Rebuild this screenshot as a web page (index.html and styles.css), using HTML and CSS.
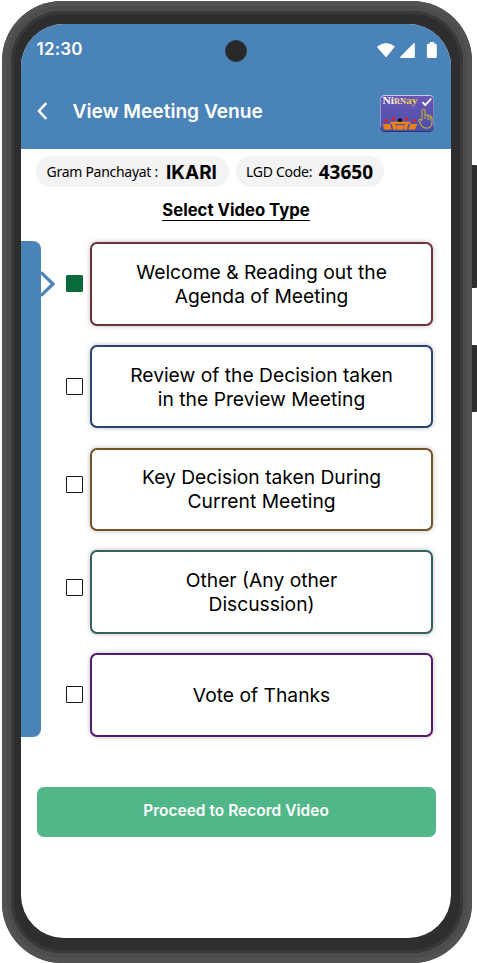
FILE: index.html
```html
<!DOCTYPE html>
<html lang="en">
<head>
<meta charset="utf-8">
<title>View Meeting Venue</title>
<link rel="stylesheet" href="styles.css">
</head>
<body>
<div class="device">
  <div class="bezel">
    <div class="bezel-edge">
      <main class="screen">
        <header class="header">
          <div class="status">
            <span class="time">12:30</span>
            <span class="camera"></span>
            <svg class="status-icons" width="62" height="20" viewBox="0 0 62 20">
              <path fill="#fff" d="M1.3 5.6Q10-1.400 19 5.600L10.900 15.500Q10.100 16.500 9.300 15.500L1.500 6.700Q1 6 1.300 5.600Z"/>
              <path fill="#fff" d="M38.800 2V17H24.500Q23.700 16.800 24.200 16.100L37.800 2Z"/>
              <path fill="#fff" d="M53.800 1H58.200V2.700H59.500Q60.800 2.700 60.800 4V15.700Q60.800 17 59.500 17H52.200Q50.900 17 50.900 15.700V4Q50.900 2.700 52.200 2.700H53.800Z"/>
            </svg>
          </div>
          <div class="titlebar">
            <svg class="back" width="11" height="18" viewBox="0 0 11 18"><path d="M9.300 1.200 2 9l7.300 7.800" fill="none" stroke="#fff" stroke-width="2.500"/></svg>
            <h1 class="title">View Meeting Venue</h1>
            <svg class="logo" width="56" height="40" viewBox="0 0 56 40">
              <defs><linearGradient id="plate" x1="0" y1="0" x2="0" y2="1"><stop offset="0" stop-color="#6a56b4"/><stop offset="1" stop-color="#4a4fac"/></linearGradient></defs>
              <rect x="1.200" y="2" width="53.600" height="36" rx="4.500" fill="#28346e"/>
              <rect x="1.200" y="1" width="53.600" height="35" rx="4.500" fill="#c9c8ec"/>
              <rect x="1.700" y="2" width="52.800" height="35" rx="4" fill="url(#plate)"/>
              <g fill="#7e78c6"><circle cx="8" cy="15" r=".6"/><circle cx="15" cy="19" r=".5"/><circle cx="20" cy="14" r=".5"/><circle cx="27" cy="18" r=".6"/><circle cx="34" cy="14" r=".6"/><circle cx="12" cy="23" r=".5"/><circle cx="38" cy="20" r=".5"/><circle cx="23" cy="22" r=".5"/></g>
              <text x="3.500" y="10" class="logo-text" textLength="35" lengthAdjust="spacingAndGlyphs"><tspan fill="#fff">Ni</tspan><tspan class="logo-caps" fill="#eedb9c">RN</tspan><tspan fill="#e5c944">ay</tspan></text>
              <path d="m43.500 8.200 2.800 3 6-6.700" fill="none" stroke="#fff" stroke-width="1.800"/>
              <path d="M43 26V17Q43 15 44.500 15T46 17V21.500Q47.500 19.500 48.800 21.800 50.500 20.200 51.200 22.600 53 22 53 24.500V29Q52.500 34 47.500 34.200 43.500 34 41.500 30L39.800 27Q39.500 25 41.300 25.500L43 27.500M46 21V25M48.900 22V26M51.200 23V26.500" fill="none" stroke="#c4ad35" stroke-width="1.100"/>
              <g fill="#dc2425"><circle cx="7.200" cy="26.600" r="1.700"/><circle cx="14.600" cy="24.800" r="1.700"/><circle cx="27.400" cy="24.800" r="1.700"/><circle cx="35.400" cy="26.600" r="1.700"/></g>
              <circle cx="20.900" cy="26.300" r="2.100" fill="#050505"/>
              <path fill="#ee8011" d="m3.500 30 7.500-.1 1.600 5.600H5.400ZM11.200 27.700H31.400V30H29.200L28 35.700H24.700L26 30H16.200L17.800 35.700H14.300L12.900 30H11.200ZM16.800 31.200H25.400L23.700 35.700H18.500ZM31.300 30H38.300L36 35.500H29.400Z"/>
            </svg>
          </div>
        </header>
        <div class="chips">
          <div class="chip chip-gp"><span class="chip-label">Gram Panchayat :</span><b class="chip-name">IKARI</b></div>
          <div class="chip chip-lgd"><span class="chip-label">LGD Code:</span><b class="chip-code">43650</b></div>
        </div>
        <h2 class="heading"><span class="heading-text">Select Video Type</span></h2>
        <section class="picker">
          <div class="rail"><svg class="pointer" width="15" height="28" viewBox="0 0 15 28"><path d="M0 2.300 12 14 0 25.700" fill="#fff" stroke="#4a83b8" stroke-width="3.200"/></svg></div>
          <div class="options">
            <div class="option"><span class="box checked"></span><div class="card maroon">Welcome &amp; Reading out the<br>Agenda of Meeting</div></div>
            <div class="option"><span class="box"></span><div class="card navy">Review of the Decision taken<br>in the Preview Meeting</div></div>
            <div class="option"><span class="box raised"></span><div class="card brown">Key Decision taken During<br>Current Meeting</div></div>
            <div class="option"><span class="box raised"></span><div class="card teal">Other (Any other<br>Discussion)</div></div>
            <div class="option"><span class="box"></span><div class="card purple">Vote of Thanks</div></div>
          </div>
        </section>
        <button class="proceed">Proceed to Record Video</button>
      </main>
    </div>
  </div>
  <div class="keys"><span class="key volume"></span><span class="key power"></span></div>
</div>
</body>
</html>
```
FILE: styles.css
```css
* { box-sizing: border-box; }
body { margin: 0; background: #fff; font-family: Inter, sans-serif; overflow: hidden; }
.device { display: flex; width: 477px; height: 963px; padding: 1.300px 0 0 1.500px; }
.bezel {
  width: 471px; height: 961.700px; padding: 9.500px; border-radius: 60px;
  background: #4c4c4c; box-shadow: inset 0 0 0 5px #525252;
}
.bezel-edge { height: 100%; padding: 10px; border-radius: 51px; background: #2e2e2e; box-shadow: inset 0 0 0 3px #393939; }
.screen {
  display: flex; flex-direction: column; width: 430px; height: 914px; margin-top: 3.500px;
  border-radius: 43px; overflow: hidden; background: #fff;
}
.keys { display: flex; flex-direction: column; gap: 57px; width: 5px; padding-top: 163.700px; }
.key { background: #2e2e2e; border-radius: 0 1px 1px 0; }
.volume { height: 123px; }
.power { height: 67px; }

.header { flex: none; height: 124.700px; background: #4a83b8; color: #fff; }
.status { display: grid; grid-template-columns: 1fr 22px 1fr; align-items: center; height: 53px; padding: 0 13.500px 0 15.500px; }
.time { font-size: 17px; font-weight: 600; line-height: 20px; margin-top: -4px; letter-spacing: .2px; }
.camera { width: 22px; height: 22px; margin-left: -.7px; border-radius: 50%; background: #27282a; border: 1px solid #303235; }
.status-icons { justify-self: end; }
.titlebar { display: flex; align-items: center; height: 68px; padding: 0 16px 0 15.500px; }
.back { margin-top: -1px; }
.title { margin: 0 0 0 25px; font-size: 19.150px; line-height: 24px; font-weight: 600; white-space: nowrap; }
.logo { margin-left: auto; margin-top: 5px; }
.logo-text { font-family: "Liberation Serif", serif; font-weight: bold; font-size: 11px; }
.logo-caps { font-size: 8px; }

.chips { display: flex; gap: 7px; padding: 7px 0 0 14.500px; }
.chip { display: flex; align-items: center; height: 31px; border-radius: 16px; background: #f3f3f3; color: #000; white-space: nowrap; padding-left: 11px; }
.chip-gp { width: 193.500px; }
.chip-lgd { width: 148px; padding-left: 10px; }
.chip-label { font: 14px "Noto Sans", sans-serif; letter-spacing: -.28px; }
.chip-name { margin: 2px 0 0 8px; font-size: 19px; }
.chip-code { margin: 2px 0 0 6.500px; font: bold 19px "Noto Sans", sans-serif; }
.heading { display: flex; justify-content: center; margin: 13px 0 0; font-size: 16.700px; line-height: 20px; font-weight: 700; }
.heading-text { border-bottom: 1px solid #000; }

.picker { display: flex; height: 496px; margin-top: 20px; }
.rail { width: 20px; height: 496px; padding: 29px 0 0 20px; border-radius: 0 8px 8px 0; background: #4a83b8; }
.pointer { display: block; overflow: visible; }
.options { display: flex; flex-direction: column; gap: 19.200px; padding-top: 1px; margin-left: 25.300px; }
.option { display: flex; align-items: center; gap: 7px; height: 83.600px; }
.box { width: 17px; height: 17px; border: 1.300px solid #171717; border-radius: 1px; }
.box.checked { background: #0a6a3c; border-color: #0a6a3c; }
.box.raised { margin-bottom: 9.500px; }
.card {
  display: flex; align-items: center; justify-content: center; width: 342.500px; height: 83.600px;
  border: 2px solid; border-radius: 7px; background: #fff; box-shadow: 0 0 5px #0004; color: #000;
  font-size: 19.250px; font-weight: 400; line-height: 24px; text-align: center; white-space: nowrap;
}
.maroon { border-color: #703237; }
.navy { border-color: #2d426e; }
.brown { border-color: #735429; }
.teal { border-color: #346064; }
.purple { border-color: #531b6f; }
.proceed {
  flex: none; width: 399px; height: 50px; margin: 50px 0 0 15.500px; padding: 0 0 2px;
  border: 0; border-radius: 7px; background: #52b788; color: #fff;
  font: 600 15.400px Inter, sans-serif; letter-spacing: .07px;
}
```
